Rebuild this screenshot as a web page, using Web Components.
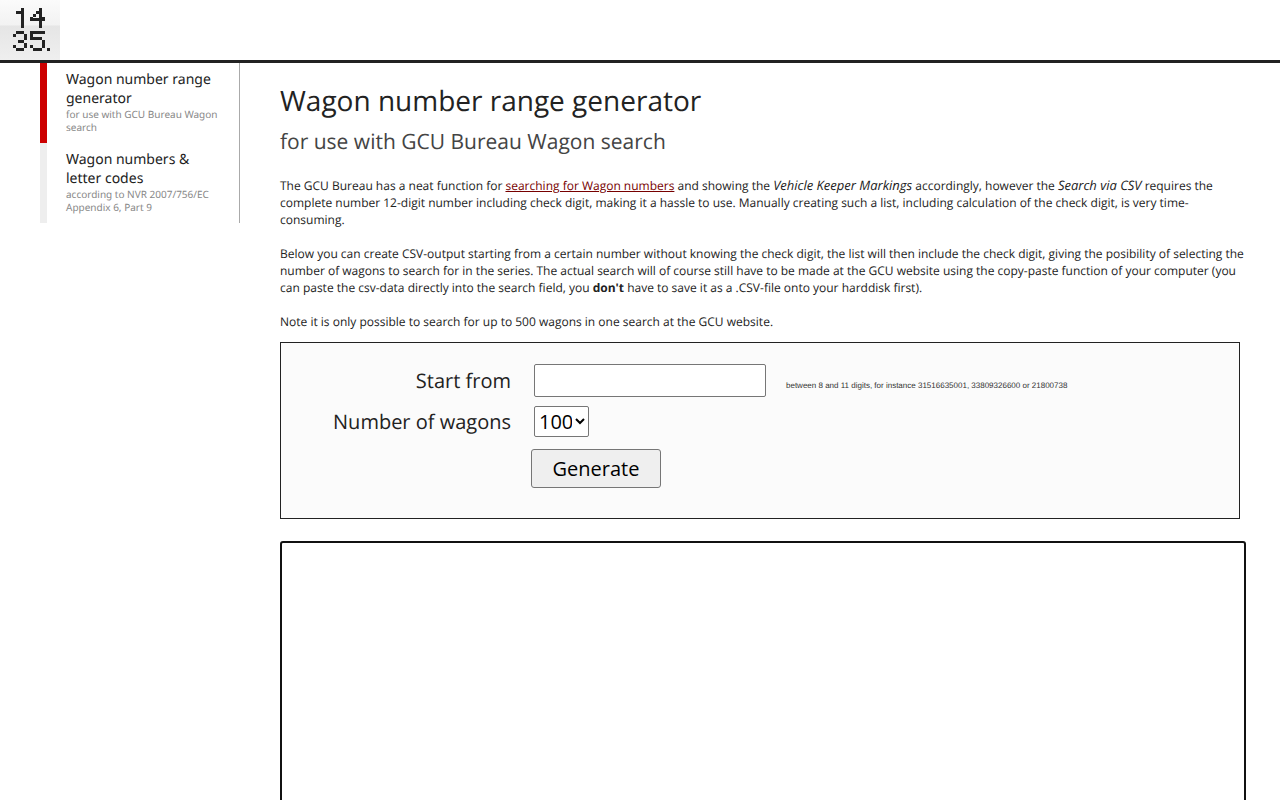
<!DOCTYPE html>
<html lang="en">
<head>
<meta charset="utf-8">
<meta name="viewport" content="width=device-width, initial-scale=1">
<title>Wagon number range generator</title>
<style>
  body { margin: 0; background: #fff; color: #222; font: 12px/17px "Open Sans", sans-serif; text-rendering: geometricPrecision; }
</style>
</head>
<body>
<app-page>
  <site-header slot="header"></site-header>
  <side-nav slot="nav">
    <nav-item href="#range" active>Wagon number range generator<span slot="note">for use with GCU Bureau Wagon search</span></nav-item>
    <nav-item href="#codes">Wagon numbers &amp; letter codes<span slot="note">according to NVR 2007/756/EC Appendix 6, Part 9</span></nav-item>
  </side-nav>
  <article-intro></article-intro>
  <range-form></range-form>
  <csv-output></csv-output>
</app-page>

<script>
const define = (name, html) => customElements.define(name, class extends HTMLElement {
  constructor() {
    super();
    this.attachShadow({ mode: "open" }).innerHTML = html;
    if (name === "nav-item") this.shadowRoot.querySelector("a").href = this.getAttribute("href");
  }
});

define("app-page", `
  <style>
    :host { display: block; }
    .columns { display: flex; align-items: flex-start; }
    main { flex: 1; min-width: 0; padding: 21px 40px 40px; }
  </style>
  <slot name="header"></slot>
  <div class="columns"><slot name="nav"></slot><main><slot></slot></main></div>`);

define("site-header", `
  <style>
    :host { display: block; border-bottom: 3px solid #222; }
    header { display: flex; }
    a { display: block; width: 60px; height: 60px; background: linear-gradient(#fbfbfb, #f2f2f2 42%, #e5e5e5 43%, #efefef); }
    svg { display: block; }
  </style>
  <header><a href="#" aria-label="1435 home">
    <svg width="60" height="60" fill="#222" shape-rendering="crispEdges" aria-hidden="true">
      <path d="M21 8h3v20h-3v-14h-5v-3h5z"/>
      <path d="M39 8h3v9h3v4h-3v7h-3v-7h-9v-4h3v1h6zM36 11h3v3h-3zM33 14h3v3h-3z"/>
      <path d="M16 31h8v3h-8zM13 34h3v3h-3zM24 34h3v6h-3zM18 40h6v3h-6zM24 43h3v5h-3zM13 45h3v3h-3zM16 48h8v3h-8zM30 31h15v3h-12v3h9v3h-12zM42 40h3v8h-3zM30 45h3v3h-3zM33 48h9v3h-9zM47 48h3v3h-3z"/>
    </svg></a></header>`);

define("side-nav", `
  <style>
    :host { display: block; flex: none; width: 199px; margin-left: 40px; border-right: 1px solid #aaa; }
    nav { display: flex; flex-direction: column; }
  </style>
  <nav><slot></slot></nav>`);

define("nav-item", `
  <style>
    :host { display: block; border-left: 7px solid #eee; }
    :host([active]) { border-left-color: #c00; }
    a { display: block; padding: 7px 16px 9px 19px; color: #222; font: 14px/19px "Noto Sans", "Open Sans", sans-serif; text-decoration: none; }
    small { display: block; color: #888; font-size: 10px; line-height: 13px; }
  </style>
  <a><slot></slot><small><slot name="note"></slot></small></a>`);

define("article-intro", `
  <style>
    :host { display: block; }
    h1 { margin: 0; font-size: 28px; line-height: 34px; font-weight: 400; }
    h2 { margin: 9px 0 20px; font-size: 21px; line-height: 30px; font-weight: 400; color: #444; }
    p { margin: 0 -6px 17px 0; }
    p:last-child { margin-bottom: 12px; }
    em { font-size: 13px; }
    a { color: #700; }
  </style>
  <h1>Wagon number range generator</h1>
  <h2>for use with GCU Bureau Wagon search</h2>
  <p>The GCU Bureau has a neat function for <a href="#gcu">searching for Wagon numbers</a> and showing the <em>Vehicle Keeper Markings</em> accordingly, however the <em>Search via CSV</em> requires the complete number 12-digit number including check digit, making it a hassle to use. Manually creating such a list, including calculation of the check digit, is very time-consuming.</p>
  <p>Below you can create CSV-output starting from a certain number without knowing the check digit, the list will then include the check digit, giving the posibility of selecting the number of wagons to search for in the series. The actual search will of course still have to be made at the GCU website using the copy-paste function of your computer (you can paste the csv-data directly into the search field, you <strong>don't</strong> have to save it as a .CSV-file onto your harddisk first).</p>
  <p>Note it is only possible to search for up to 500 wagons in one search at the GCU website.</p>`);

define("range-form", `
  <style>
    :host { display: block; border: 1px solid #222; background: #fbfbfb; font-size: 20px; line-height: 27px; }
    form { display: grid; grid-template-columns: 230px 1fr; column-gap: 20px; padding: 21px 0 30px; align-items: center; }
    label { text-align: right; }
    .field { display: flex; align-items: center; gap: 20px; padding-left: 3px; }
    input, select, button { box-sizing: border-box; margin: 0; font: 20px/27px "Open Sans", sans-serif; }
    input { width: 232px; height: 33px; border: 1px solid #767676; border-radius: 2px; background: #fff; }
    select { height: 31px; width: 55px; padding: 0; border: 1px solid #767676; border-radius: 2px; background: #fff; color: #000; }
    .count { height: 49px; }
    button { grid-column: 2; justify-self: start; width: 130px; height: 39px; margin-top: 3px; border: 1px solid #767676; border-radius: 3px; background: #efefef; color: #000; }
    small { padding-top: 10px; font: 8px/12px "Liberation Sans", sans-serif; color: #333; }
  </style>
  <form onsubmit="return false">
    <label for="start">Start from</label>
    <div class="field"><input id="start" type="text" aria-describedby="hint"><small id="hint">between 8 and 11 digits, for instance 31516635001, 33809326600 or 21800738</small></div>
    <label for="count">Number of wagons</label>
    <div class="field count"><select id="count"><option>100</option><option>200</option><option>500</option></select></div>
    <button>Generate</button>
  </form>`);

define("csv-output", `
  <style>
    :host { display: block; margin: 22px -6px 0 0; }
    textarea { display: block; box-sizing: border-box; width: 100%; height: 400px; margin: 0; padding: 2px; border: 2px solid #111; border-radius: 3px; background: #fff; font: 12px/17px "Open Sans", sans-serif; resize: vertical; }
  </style>
  <textarea aria-label="CSV output"></textarea>`);
</script>
</body>
</html>
